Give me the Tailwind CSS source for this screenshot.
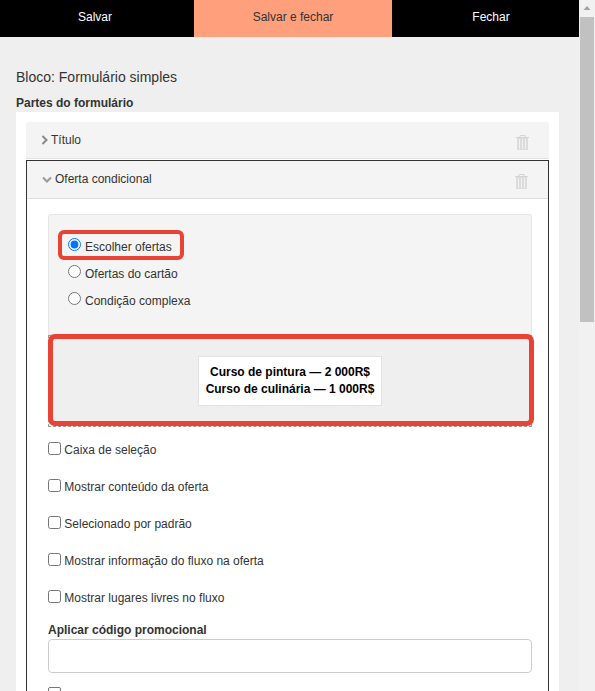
<!DOCTYPE html>
<html lang="pt">
  <head>
    <meta charset="UTF-8" />
    <title>Formulário simples</title>
    <script src="https://cdn.jsdelivr.net/npm/@tailwindcss/browser@4"></script>
  </head>
  <body class="font-['Liberation_Sans',Arial,sans-serif] text-[12px] text-[#333] bg-[#efefef]">
    <div class="flex h-[691px] overflow-hidden">
      <div class="w-[579px] shrink-0 h-[691px] overflow-hidden">
        <!-- Top bar -->
        <div class="flex h-[37px] bg-black text-white text-center leading-[35px]">
          <div class="w-[194px] pr-[4px]">Salvar</div>
          <div class="w-[198px] bg-[#ff9f7b] text-[#333]">Salvar e fechar</div>
          <div class="w-[187px] pl-[11px]">Fechar</div>
        </div>

        <div class="pl-4 pr-5 pt-[31px]">
          <h2 class="text-[14px] leading-[18px] mb-[8px]">Bloco: Formulário simples</h2>
          <h3 class="font-bold leading-[18px] h-[18px]">Partes do formulário</h3>

          <div class="bg-white w-[543px] pl-[10px] pr-[10px] pt-[10px]">
            <!-- Collapsed item -->
            <div class="flex items-center justify-between h-[37px] mb-[1px] bg-[#f4f4f4] border-b border-[#e2e2e2] rounded-t-[3px] pl-[15px] pr-[20px]">
              <div class="flex items-center gap-[2px]">
                <svg class="w-[8px] h-[10px]" viewBox="0 0 8 10" fill="none" stroke="#888" stroke-width="2"><path d="M1.5 1 L5.5 5 L1.5 9" /></svg>
                <span class="leading-[16px] -mt-[1px]">Título</span>
              </div>
              <svg class="w-[13px] h-[15px] mt-[4px]" viewBox="0 0 13 15" fill="none">
                <path d="M0 2.5h13" stroke="#d4d4d4" /><path d="M4 2.5V.5h5v2" stroke="#d4d4d4" />
                <path d="M1 3h11v12H1z" fill="#dcdcdc" />
                <path d="M3.5 4v10M6.5 4v10M9.5 4v10" stroke="#f0f0f0" />
              </svg>
            </div>

            <!-- Open item -->
            <div class="border border-[#333] border-b-0 pb-10">
              <div class="flex items-center justify-between h-[38px] bg-[#f4f4f4] border-b border-[#ddd] pl-[15px] pr-[20px]">
                <div class="flex items-center gap-[3px]">
                  <svg class="w-[10px] h-[8px]" viewBox="0 0 10 8" fill="none" stroke="#999" stroke-width="2"><path d="M1 1.5 L5 5.5 L9 1.5" /></svg>
                  <span class="leading-[16px] -mt-[1px]">Oferta condicional</span>
                </div>
                <svg class="w-[13px] h-[15px] mt-[4px]" viewBox="0 0 13 15" fill="none">
                  <path d="M0 2.5h13" stroke="#d4d4d4" /><path d="M4 2.5V.5h5v2" stroke="#d4d4d4" />
                  <path d="M1 3h11v12H1z" fill="#dcdcdc" />
                  <path d="M3.5 4v10M6.5 4v10M9.5 4v10" stroke="#f0f0f0" />
                </svg>
              </div>

              <div class="pl-[21px] pr-[16px] pt-[15px]">
                <!-- Offer source -->
                <div class="relative h-[121px] bg-[#f4f4f4] border border-[#e6e6e6] rounded-t-[3px] pl-[19px] pt-[22px]">
                  <label class="flex h-[27px] items-start gap-[4px]"><input type="radio" name="src" checked class="m-0 mt-[1px] w-[13px] h-[13px]" /><span class="leading-[18px] mt-[1px]">Escolher ofertas</span></label>
                  <label class="flex h-[27px] items-start gap-[4px]"><input type="radio" name="src" class="m-0 mt-[1px] w-[13px] h-[13px]" /><span class="leading-[18px] mt-[1px]">Ofertas do cartão</span></label>
                  <label class="flex h-[27px] items-start gap-[4px]"><input type="radio" name="src" class="m-0 mt-[1px] w-[13px] h-[13px]" /><span class="leading-[18px] mt-[1px]">Condição complexa</span></label>
                  <!-- highlight -->
                  <div class="absolute left-[9px] top-[15px] w-[126px] h-[30px] border-[4px] border-[#e94335] rounded-[6px]"></div>
                </div>

                <!-- Selected offers -->
                <div class="relative h-[92px] bg-[#efefef] border border-dashed border-[#999] flex items-center justify-center">
                  <div class="w-[184px] h-[50px] bg-white border border-[#e2e2e2] flex flex-col justify-center text-center font-bold text-black leading-[17px]">
                    <div>Curso de pintura — 2 000R$</div>
                    <div>Curso de culinária — 1 000R$</div>
                  </div>
                  <div class="absolute -left-[1px] -top-[2px] w-[486px] h-[92px] border-[5px] border-[#e94335] rounded-[7px]"></div>
                </div>

                <!-- Options -->
                <div class="pt-[15px]">
                  <label class="flex h-[37px] items-start gap-[3.33px]"><input type="checkbox" class="m-0 w-[13px] h-[13px]" /><span class="leading-[16px]">Caixa de seleção</span></label>
                  <label class="flex h-[37px] items-start gap-[3.33px]"><input type="checkbox" class="m-0 w-[13px] h-[13px]" /><span class="leading-[16px]">Mostrar conteúdo da oferta</span></label>
                  <label class="flex h-[37px] items-start gap-[3.33px]"><input type="checkbox" class="m-0 w-[13px] h-[13px]" /><span class="leading-[16px]">Selecionado por padrão</span></label>
                  <label class="flex h-[37px] items-start gap-[3.33px]"><input type="checkbox" class="m-0 w-[13px] h-[13px]" /><span class="leading-[16px]">Mostrar informação do fluxo na oferta</span></label>
                  <label class="flex h-[31px] items-start gap-[3.33px]"><input type="checkbox" class="m-0 w-[13px] h-[13px]" /><span class="leading-[16px]">Mostrar lugares livres no fluxo</span></label>
                </div>
                <div class="font-bold leading-[18px] h-[18px]">Aplicar código promocional</div>
                <input type="text" class="block w-[484px] h-[34px] bg-white border border-[#ccc] rounded-[4px]" />
                <div class="mt-[14px] w-[13px] h-[13px] border border-[#767676] rounded-[2px]"></div>
              </div>
            </div>
          </div>
        </div>
      </div>

      <!-- Scrollbar -->
      <div class="w-[16px] h-[691px] bg-[#f1f1f1] flex flex-col items-center">
        <svg class="w-[16px] h-[17px] shrink-0" viewBox="0 0 16 17"><path d="M4.5 10 L8 6 L11.5 10z" fill="#a3a3a3" /></svg>
        <div class="w-[14px] h-[305px] bg-[#c1c1c1]"></div>
      </div>
    </div>
  </body>
</html>
